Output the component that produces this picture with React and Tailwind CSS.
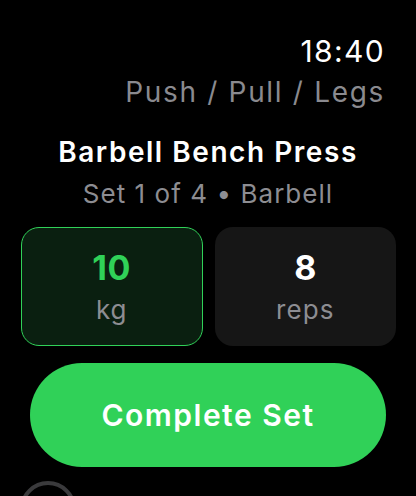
export default function App() {
  return (
    <div
      className="relative h-[496px] w-[416px] overflow-hidden bg-black text-white"
      style={{ fontFamily: 'Inter, "Noto Sans", sans-serif' }}
    >
      <div className="flex flex-col">
        <div className="pr-[31px] pt-[33px] text-right">
          <div className="text-[30px] font-normal leading-[36px] tracking-[0.045em] text-white">18:40</div>
          <div className="mt-[6px] text-[28px] leading-[34px] tracking-[0.06em] text-[#8a8a8f]">
            Push / Pull / Legs
          </div>
        </div>

        <div className="mt-[26px] text-center">
          <div className="text-[28px] font-semibold leading-[34px] tracking-[0.055em]">Barbell Bench Press</div>
          <div className="mt-[9px] text-[26px] leading-[32px] tracking-[0.04em] text-[#8d8d92]">
            Set 1 of 4 • Barbell
          </div>
        </div>

        <div className="mt-[17px] grid grid-cols-2 gap-[12px] pl-[21px] pr-[20px]">
          <div className="flex h-[119px] flex-col items-center justify-center rounded-[18px] border-[1.5px] border-[#30d158] bg-[#0a1f10]">
            <div className="text-[34px] font-bold leading-[40px] tracking-[0.02em] text-[#30d158]">10</div>
            <div className="mt-[6px] text-[26px] leading-[32px] tracking-[0.04em] text-[#8d8d92]">kg</div>
          </div>
          <div className="flex h-[119px] flex-col items-center justify-center rounded-[18px] bg-[#161616]">
            <div className="text-[34px] font-bold leading-[40px] text-white">8</div>
            <div className="mt-[6px] text-[26px] leading-[32px] tracking-[0.04em] text-[#8d8d92]">reps</div>
          </div>
        </div>

        <div className="mt-[17px] px-[30px]">
          <button className="flex h-[104px] w-full items-center justify-center rounded-full bg-[#30d158] text-[30px] font-semibold tracking-[0.05em] text-white">
            Complete Set
          </button>
        </div>

        <div className="mt-[14px] pl-[20px]">
          <div className="h-[56px] w-[56px] rounded-full border-[4px] border-[#3a3a3c]" />
        </div>
      </div>
    </div>
  )
}
